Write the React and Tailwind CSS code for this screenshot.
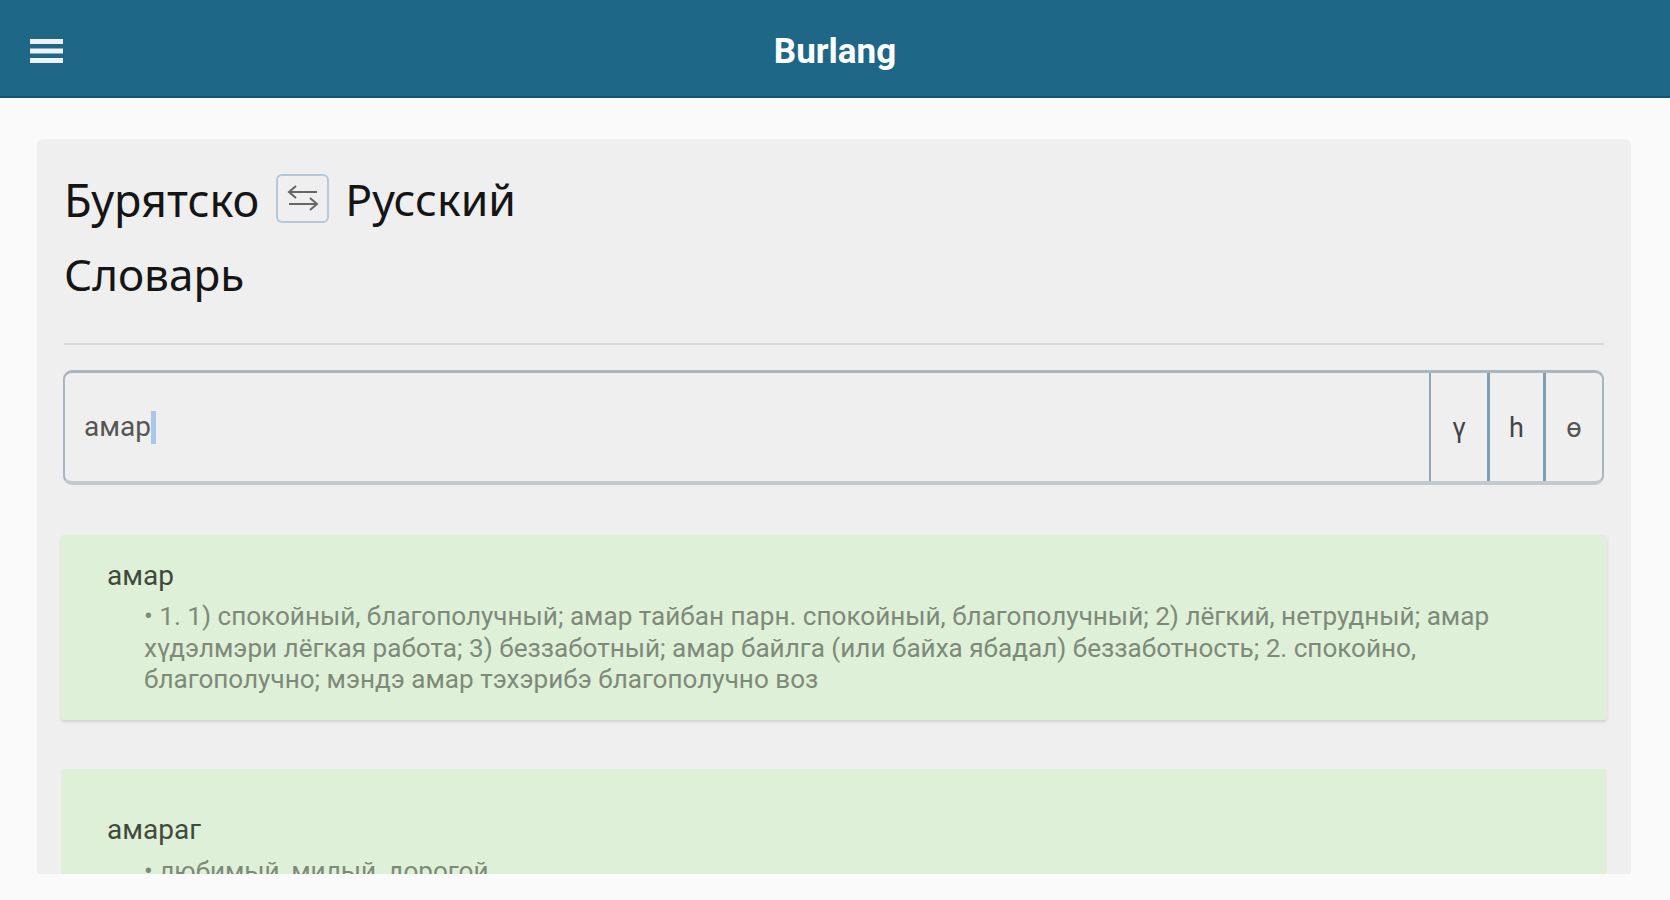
function Entry({ word, text, className, bodyClass }) {
  return (
    <div className={`bg-[#dff0d8] rounded-[3px] pl-[46px] pr-[100px] text-[26.1px] leading-[31.5px] font-['Roboto',sans-serif] ${className}`}>
      <div className="text-[#3f4a3c] text-[28px] leading-[32px]">{word}</div>
      <div className={`pl-[37px] text-[#7d8a79] ${bodyClass}`}>• {text}</div>
    </div>
  );
}

function App() {
  return (
    <div className="h-[900px] bg-[#fafafa] overflow-hidden font-['Roboto',sans-serif]">
      <header className="h-[98px] bg-[#1f6787] border-b-2 border-[#0f5472] flex items-center justify-center relative">
        <svg className="absolute left-[30px] top-[39px]" width="33" height="24" viewBox="0 0 33 24" fill="#eef2f5">
          <rect x="0" y="0" width="33" height="5" />
          <rect x="0" y="9.5" width="33" height="5" />
          <rect x="0" y="19" width="33" height="5" />
        </svg>
        <span className="text-white text-[35px] font-bold pt-[8px]">Burlang</span>
      </header>

      <main className="mx-[37px] mt-[41px] h-[735px] w-[1594px] bg-[#efefef] rounded-t-[6px] overflow-hidden px-[27px] pt-[27px]">
        <div className="flex items-center h-[64px] text-[45px] text-[#151515] font-['Noto_Sans',sans-serif]">
          <span className="pt-[3px]">Бурятско</span>
          <button className="ml-[17px] mr-[16px] w-[53px] h-[49px] border-2 border-[#b4c8da] rounded-[6px] flex items-center justify-center text-[#666666]">
            <svg width="34" height="30" viewBox="0 0 34 30" fill="none" stroke="currentColor" strokeWidth="2">
              <path d="M31 9H4M10 3L3 9l7 6" />
              <path d="M3 21h27M24 15l7 6-7 6" />
            </svg>
          </button>
          <span className="pt-[3px] text-[44.5px]">Русский</span>
        </div>
        <h1 className="text-[44px] leading-[64px] mt-[12px] text-[#151515] font-['Noto_Sans',sans-serif]">Словарь</h1>

        <div className="mt-[37px] h-[2px] bg-[#d9d9d9]"></div>

        <div className="-ml-[1px] mt-[25px] h-[115px] flex border-x-2 border-t-[3px] border-[#aab6bf] border-b-[4px] border-b-[#c4c9cf] rounded-[9px]">
          <div className="flex-1 flex items-center pl-[19px] text-[28px] text-[#555555]">
            амар
            <span className="w-[5px] h-[33px] bg-[#a9c7ee]"></span>
          </div>
          <div className="w-[58px] border-l-2 border-[#8ea6b8] flex items-center justify-center pt-[2px] text-[27px] text-[#444444]">ү</div>
          <div className="w-[56px] border-l-[3px] border-[#7f9fb5] flex items-center justify-center pt-[2px] text-[27px] text-[#444444]">һ</div>
          <div className="w-[59px] border-l-[3px] border-[#7f9fb5] flex items-center justify-center pt-[2px] text-[27px] text-[#555555]">ө</div>
        </div>

        <div className="-mx-[3px] mt-[50px] flex flex-col gap-[49px]">
          <Entry
            word="амар"
            className="h-[185px] pt-[25px] shadow-[0_2px_3px_rgba(0,0,0,0.12)]"
            bodyClass="mt-[9px]"
            text="1. 1) спокойный, благополучный; амар тайбан парн. спокойный, благополучный; 2) лёгкий, нетрудный; амар хүдэлмэри лёгкая работа; 3) беззаботный; амар байлга (или байха ябадал) беззаботность; 2. спокойно, благополучно; мэндэ амар тэхэрибэ благополучно воз"
          />
          <Entry word="амараг" className="h-[200px] pt-[45px]" bodyClass="mt-[10px]" text="любимый, милый, дорогой" />
        </div>
      </main>
    </div>
  );
}

export default App;
